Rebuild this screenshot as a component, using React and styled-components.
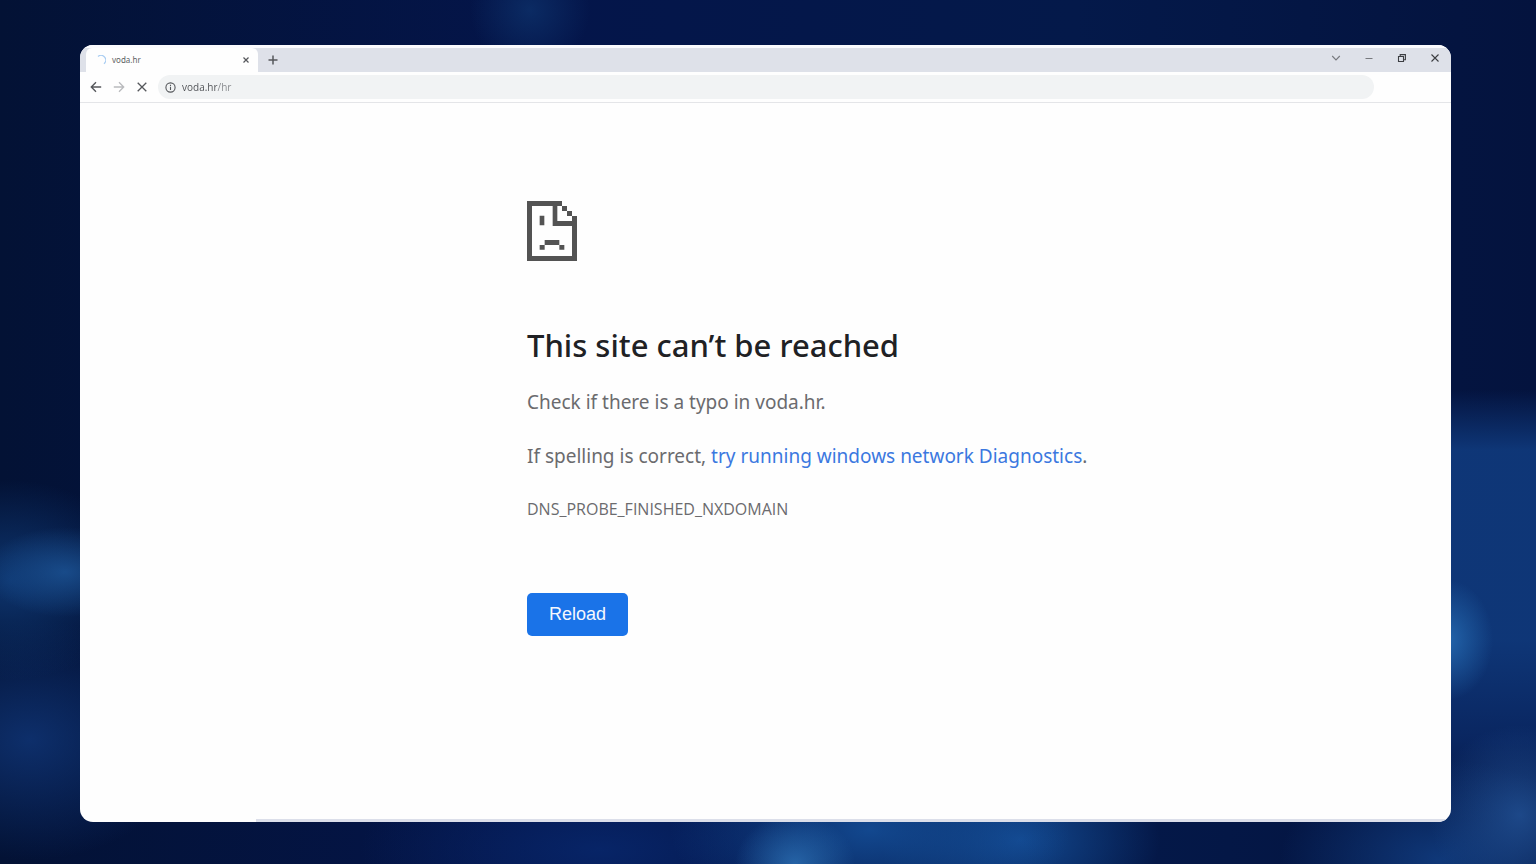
import React from "react";
import styled, { createGlobalStyle } from "styled-components";

const GlobalStyle = createGlobalStyle`
  *, *::before, *::after { box-sizing: border-box; }
  body { margin: 0; background: #03123f; }
  button, input { font: inherit; }
`;

const Desktop = styled.div`
  display: flex;
  min-height: 100vh;
  padding: 45px 85px 42px 80px;
  font-family: "Noto Sans", "Open Sans", sans-serif;
  background:
    radial-gradient(ellipse 80px 45px at 65px 572px, rgba(28, 84, 150, 0.8), transparent),
    radial-gradient(ellipse 130px 100px at 10px 580px, rgba(16, 62, 125, 0.8), transparent),
    radial-gradient(ellipse 160px 120px at 30px 740px, rgba(16, 54, 120, 0.8), transparent),
    radial-gradient(ellipse 45px 60px at 1448px 640px, rgba(36, 104, 175, 0.9), transparent),
    radial-gradient(ellipse 90px 90px at 1520px 815px, rgba(34, 82, 150, 0.8), transparent),
    radial-gradient(ellipse 60px 50px at 795px 864px, rgba(44, 112, 180, 0.8), transparent),
    radial-gradient(ellipse 200px 100px at 870px 830px, rgba(22, 84, 160, 0.8), transparent),
    radial-gradient(ellipse 140px 90px at 1020px 840px, rgba(22, 84, 160, 0.8), transparent),
    radial-gradient(ellipse 240px 90px at 600px 850px, rgba(8, 40, 110, 0.8), transparent),
    radial-gradient(ellipse 160px 100px at 1440px 860px, rgba(18, 65, 135, 0.8), transparent),
    radial-gradient(ellipse 60px 60px at 530px 10px, rgba(14, 52, 110, 0.7), transparent),
    linear-gradient(180deg, transparent 390px, rgba(15, 56, 122, 0.95) 450px, rgba(15, 56, 122, 0.95) 640px, rgba(10, 40, 100, 0.9) 740px, transparent 822px) right / 110px 100% no-repeat,
    linear-gradient(90deg, #031235 0%, #04154a 35%, #04194a 70%, #04133e 100%);
`;

const Window = styled.div`
  flex: 1;
  min-width: 0;
  display: flex;
  flex-direction: column;
  overflow: hidden;
  border-radius: 13px;
  background: #fefefe;
`;

const TabStrip = styled.header`
  display: flex;
  align-items: stretch;
  height: 27px;
  padding-left: 6px;
  border-top: 3px solid #fbfbfe;
  background: #dee1e9;
`;

const Tab = styled.div`
  display: flex;
  align-items: center;
  gap: 6px;
  width: 172px;
  padding: 0 6px 0 9px;
  border-radius: 6px 6px 0 0;
  background: #fefefe;
  color: #5c5e62;
  font-size: 8px;
  line-height: 12px;
`;

const TabTitle = styled.span`
  flex: 1;
`;

const IconButton = styled.button`
  display: flex;
  align-items: center;
  justify-content: center;
  flex: none;
  width: ${(p) => p.$width}px;
  height: 100%;
  padding: 0;
  border: 0;
  background: transparent;
  color: ${(p) => p.$color || "#55575b"};
`;

const WindowControls = styled.div`
  display: flex;
  height: 20px;
  margin-left: auto;
`;

const Toolbar = styled.div`
  display: flex;
  align-items: center;
  height: 31px;
  padding: 0 77px 0 4px;
  border-bottom: 1px solid #e4e5e8;
`;

const AddressBar = styled.label`
  flex: 1;
  display: flex;
  align-items: center;
  gap: 6px;
  height: 24px;
  margin-left: 5px;
  padding-left: 7px;
  border-radius: 12px;
  background: #f1f3f4;
  color: #55575b;
`;

const AddressInput = styled.input`
  flex: 1;
  min-width: 0;
  height: 16px;
  padding: 0;
  border: 0;
  outline: 0;
  font-family: "Open Sans", "Noto Sans", sans-serif;
  font-size: 10px;
  line-height: 16px;
  color: transparent;
  background: linear-gradient(90deg, #4c4e52 35px, #85878b 35px);
  background-clip: text;
`;

const Page = styled.main`
  flex: 1;
  display: grid;
  grid-template-columns: minmax(24px, 447fr) minmax(0, 924fr);
  padding: 98px 0 64px;
`;

const ErrorContent = styled.section`
  grid-column: 2;
  color: #6b6b6e;
`;

const SadPage = styled.svg`
  display: block;
  width: 50px;
  height: 60px;
  margin-bottom: 60px;
`;

const Title = styled.h1`
  margin: 0 0 18px;
  color: #202124;
  font-size: 31px;
  font-weight: 500;
  line-height: 48px;
`;

const Message = styled.p`
  margin: 0 0 24px;
  font-size: 19px;
  line-height: 30px;
`;

const HelpLink = styled.a`
  color: #3b78e0;
  text-decoration: none;
`;

const ErrorCode = styled.p`
  margin: 0 0 70px;
  font-family: "Open Sans", "Noto Sans", sans-serif;
  font-size: 16px;
  line-height: 28px;
`;

const ReloadButton = styled.button`
  height: 43px;
  padding: 0 22px;
  border: 0;
  border-radius: 5px;
  background: #1a73e8;
  color: #f4f8fe;
  font-family: "Liberation Sans", Arial, sans-serif;
  font-size: 18px;
`;

const BottomEdge = styled.div`
  height: 3px;
  margin-left: 176px;
  background: #dcdfea;
`;

const Glyph = ({ size = 12, width = 1, children }) => (
  <svg width={size} height={size} viewBox={`0 0 ${size} ${size}`} fill="none" stroke="currentColor" strokeWidth={width} aria-hidden="true">
    {children}
  </svg>
);

export default function App() {
  return (
    <>
      <GlobalStyle />
      <Desktop>
        <Window>
          <TabStrip>
            <Tab>
              <Glyph size={11} width={1.3}>
                <path d="M3 1.4A4.7 4.7 0 0 1 9 8.7" stroke="#a9cdf2" />
              </Glyph>
              <TabTitle>voda.hr</TabTitle>
              <IconButton $width={12} aria-label="Close tab">
                <Glyph size={8} width={1.2}><path d="M1.5 1.5l5 5M6.5 1.5l-5 5" /></Glyph>
              </IconButton>
            </Tab>
            <IconButton $width={30} aria-label="New tab">
              <Glyph size={10} width={1.5}><path d="M5 .5v9M.5 5h9" /></Glyph>
            </IconButton>
            <WindowControls>
              <IconButton $width={33} $color="#77797e" aria-label="Search tabs">
                <Glyph size={10} width={1.1}><path d="M1.2 3l3.8 4 3.8-4" /></Glyph>
              </IconButton>
              <IconButton $width={33} $color="#77797e" aria-label="Minimize">
                <Glyph size={10}><path d="M1.5 5.5h7" /></Glyph>
              </IconButton>
              <IconButton $width={33} $color="#3c3e42" aria-label="Restore">
                <Glyph size={10} width={1.1}><path d="M1.5 3.5h5v5h-5zM3.2 3.3V1.6h5.2v5.2H6.7" /></Glyph>
              </IconButton>
              <IconButton $width={33} $color="#3c3e42" aria-label="Close window">
                <Glyph size={10} width={1.1}><path d="M1.5 1.5l7 7M8.5 1.5l-7 7" /></Glyph>
              </IconButton>
            </WindowControls>
          </TabStrip>
          <Toolbar>
            <IconButton $width={23} aria-label="Back">
              <Glyph size={12} width={1.4}><path d="M11.2 6H1.3M6 1.3L1.3 6 6 10.7" /></Glyph>
            </IconButton>
            <IconButton $width={23} $color="#b9babd" aria-label="Forward">
              <Glyph size={12} width={1.3}><path d="M.8 6h9.9M6 1.3L10.7 6 6 10.7" /></Glyph>
            </IconButton>
            <IconButton $width={23} aria-label="Stop loading">
              <Glyph size={12} width={1.3}><path d="M1.7 1.7l8.6 8.6M10.3 1.7l-8.6 8.6" /></Glyph>
            </IconButton>
            <AddressBar>
              <Glyph size={11} width={1.1}>
                <circle cx="5.5" cy="5.5" r="4.6" />
                <path d="M5.5 4.8v3.2M5.5 2.7v1.2" />
              </Glyph>
              <AddressInput type="text" aria-label="Address" defaultValue="voda.hr/hr" />
            </AddressBar>
          </Toolbar>
          <Page>
            <ErrorContent>
              <SadPage viewBox="0 0 150 180" fill="#535353" aria-hidden="true">
                <path d="M0 0H105V15H91V60H135V45H150V180H0ZM15 15V165H135V75H77V15Z" fillRule="evenodd" />
                <path d="M105 15h15v15h-15zM120 30h15v15h-15zM38 44h14v29h-14zM53 117h44v15h-44zM38 132h15v14h-15zM97 132h15v14h-15z" />
              </SadPage>
              <Title>This site can’t be reached</Title>
              <Message>Check if there is a typo in voda.hr.</Message>
              <Message>
                If spelling is correct, <HelpLink href="#diagnostics">try running windows network Diagnostics</HelpLink>.
              </Message>
              <ErrorCode>DNS_PROBE_FINISHED_NXDOMAIN</ErrorCode>
              <ReloadButton type="button">Reload</ReloadButton>
            </ErrorContent>
          </Page>
          <BottomEdge />
        </Window>
      </Desktop>
    </>
  );
}
